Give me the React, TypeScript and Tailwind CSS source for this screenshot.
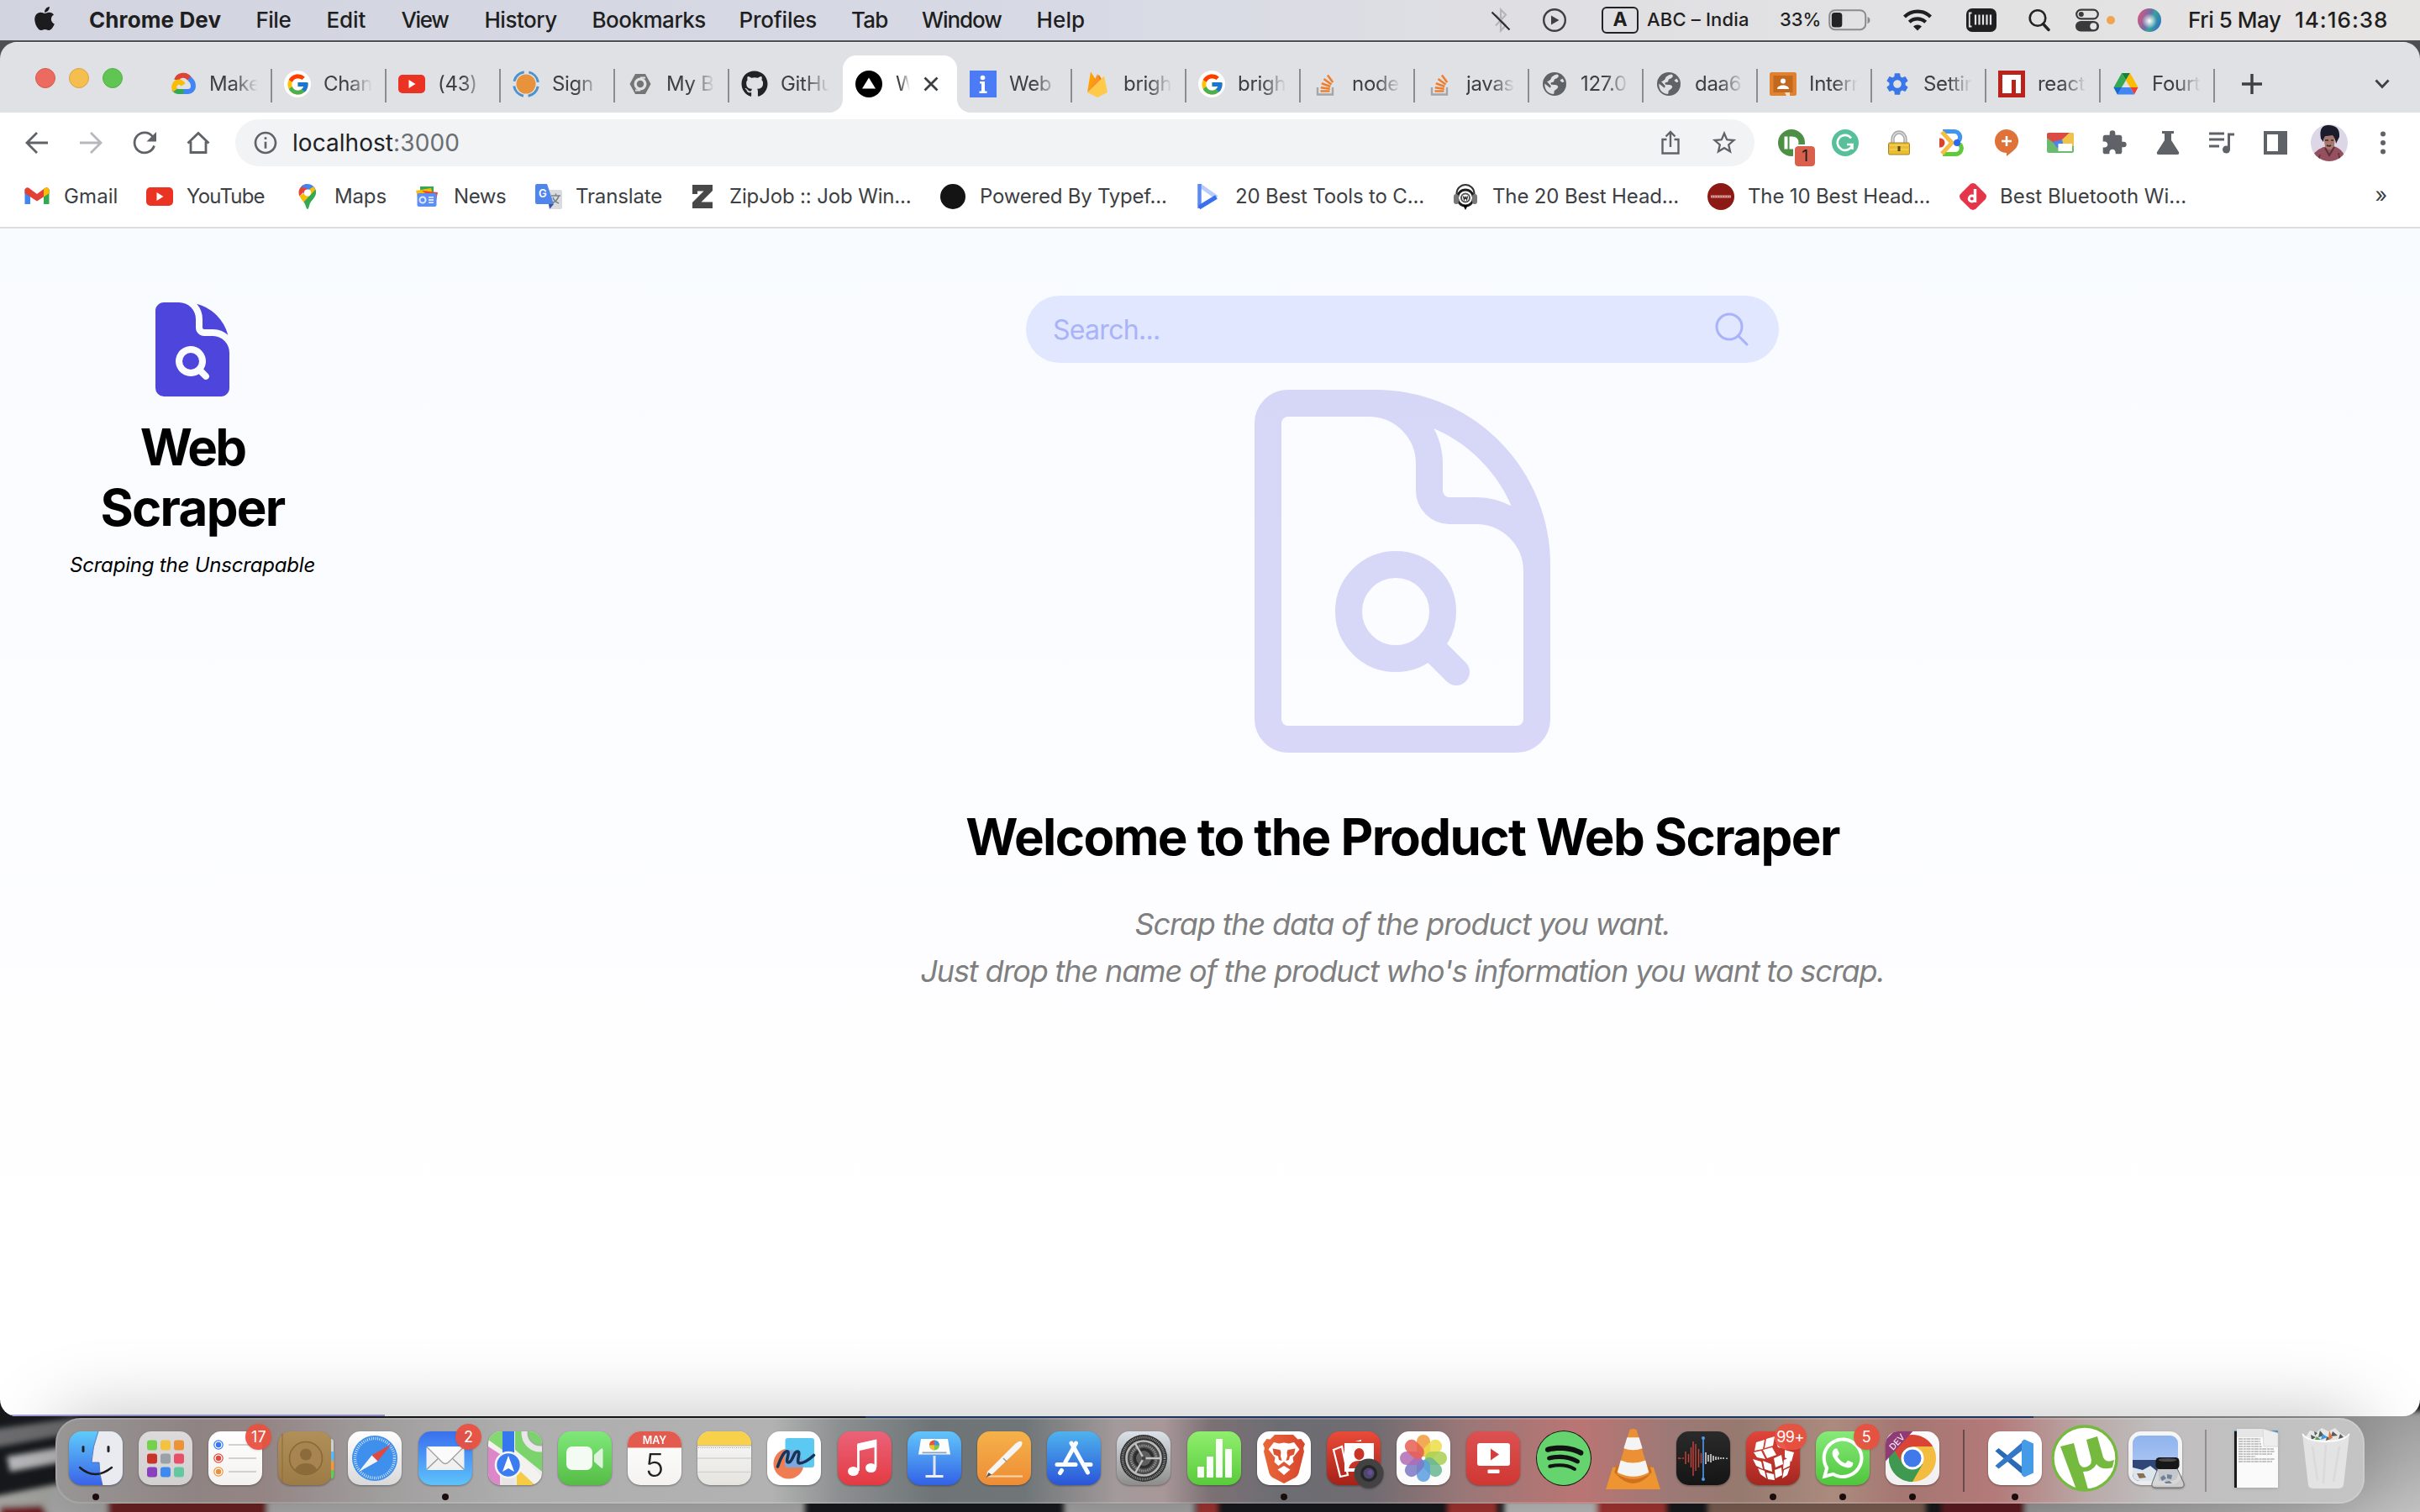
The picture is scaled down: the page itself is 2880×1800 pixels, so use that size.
import React from 'react';
import type { ReactNode } from 'react';
import { FcGoogle } from 'react-icons/fc';
import { FaGithub, FaSpotify, FaWhatsapp, FaApple } from 'react-icons/fa';
import { MdExtension, MdOutlineInfo, MdStarBorder, MdSettings } from 'react-icons/md';
import { HiDocumentMagnifyingGlass, HiOutlineDocumentMagnifyingGlass, HiOutlineMagnifyingGlass } from 'react-icons/hi2';

type Kids = { children?: ReactNode };

/* ---------- favicons (32 x 32) ---------- */

const Fav = ({ children }: Kids) => (
  <svg viewBox="0 0 32 32" className="size-8 shrink-0">
    {children}
  </svg>
);

const CloudIcon = () => (
  <Fav>
    <g fill="none" strokeWidth="6">
      <path d="M8 11.500A8.600 8.600 0 0 1 23.600 10" stroke="#db4437" />
      <path d="M23 9.500C26 11.500 28 14.500 28 18.500A6.300 6.300 0 0 1 22 24.900H16" stroke="#4285f4" />
      <path d="M16.500 24.900H10A6.300 6.300 0 0 1 5 22" stroke="#34a853" />
      <path d="M6.500 23.500A6.300 6.300 0 0 1 10.500 13.500Q14 13.500 16 17" stroke="#fbbc04" />
    </g>
  </Fav>
);

const GoogleIcon = () => (
  <span className="flex size-8 shrink-0 items-center justify-center rounded-full bg-white">
    <FcGoogle size={29} />
  </span>
);

const YouTubeIcon = () => (
  <Fav>
    <rect x="0" y="5" width="32" height="22" rx="5" fill="#ea3323" />
    <path d="M12.500 11v10l8-5z" fill="#fff" />
  </Fav>
);

const SignIcon = () => (
  <Fav>
    <circle cx="16" cy="16" r="11.500" fill="#e8923c" />
    <circle cx="16" cy="16" r="14.500" fill="none" stroke="#4b93cf" strokeWidth="3" strokeDasharray="17 5.780" strokeDashoffset="-3" />
  </Fav>
);

const HexIcon = () => (
  <Fav>
    <path d="M10 4h12l6.500 12L22 28H10L3.500 16z" fill="#757575" />
    <circle cx="16" cy="16" r="7.500" fill="#dfe1e5" />
    <path d="M16 8.500h6M16 23.500h-6" stroke="#dfe1e5" strokeWidth="2" />
    <circle cx="16" cy="16" r="4.200" fill="#757575" />
  </Fav>
);

const TriangleIcon = () => (
  <Fav>
    <circle cx="16" cy="16" r="16" fill="#000" />
    <path d="M16 8.500l8 13H8z" fill="#fff" />
  </Fav>
);

const InfoTileIcon = () => (
  <Fav>
    <rect width="32" height="32" fill="#4b7cf6" />
    <circle cx="15.500" cy="8.500" r="2.800" fill="#fff" />
    <path d="M12 13h6v11.500h2.500V27h-9v-2.500H14v-9h-2z" fill="#fff" />
  </Fav>
);

const FirebaseIcon = () => (
  <Fav>
    <path d="M4 26L8 1.500l6 9z" fill="#ffa000" />
    <path d="M4 26L18 5l4 7z" fill="#f57c00" />
    <path d="M4 26l9-15.500 3-6.500 3 7z" fill="#f6932c" />
    <path d="M4 26L24 6.500 28 26 16 32z" fill="#ffca4a" />
  </Fav>
);

const StackIcon = () => (
  <Fav>
    <path d="M6 20v8.500h18V20" fill="none" stroke="#a3a5a8" strokeWidth="2.400" />
    <g stroke="#ed7f31" strokeWidth="2.600">
      <path d="M9.500 24.500h11" />
      <path d="M9.800 20.300l11 1.500" />
      <path d="M10.800 15.200l10.500 3.800" />
      <path d="M13.500 10l9 6.500" />
      <path d="M18 5.500l6.200 8.500" />
    </g>
  </Fav>
);

const GlobeIcon = () => (
  <Fav>
    <circle cx="16" cy="16" r="14" fill="#5f6368" />
    <path d="M19 4.500c3 1 2 3 0 4.500s-3 0-3.500 3-4 1-4 3.500 6 .5 8 2.500-1 4-3 5.500 0 4-2 4.500C7 27.500 4 21 4.300 15.500l6.200 5q1.500 0 1-2.500L7 13q4-1 5-4t7-4.500z" fill="#dfe1e5" />
    <path d="M27.500 13q-3 2.500-5-1.500l3-2z" fill="#dfe1e5" />
  </Fav>
);

const ClassIcon = () => (
  <Fav>
    <rect y="2" width="32" height="28" rx="2.500" fill="#e0812f" />
    <rect x="4.500" y="6" width="23" height="20" fill="#c2691f" />
    <circle cx="16" cy="12.500" r="3" fill="#fff" />
    <path d="M9 22c0-6 14-6 14 0z" fill="#fff" />
    <path d="M18 26h6v4h-4z" fill="#fbe3cf" />
  </Fav>
);

const NpmIcon = () => (
  <Fav>
    <rect width="32" height="32" fill="#b9231c" />
    <path d="M5 5h22v22h-6V11h-5v16H5z" fill="#fff" />
  </Fav>
);

const DriveIcon = () => (
  <Fav>
    <path d="M11 3h10l-5 8.500z" fill="#188038" />
    <path d="M11 3L1.500 20l4.500 8.500L16 11.500z" fill="#34a853" />
    <path d="M21 3l9.500 17H21l-5-8.500z" fill="#fbbc04" />
    <path d="M30.500 20L26 28.500 21 20z" fill="#ea4335" />
    <path d="M11 20h10l5 8.500H6z" fill="#4285f4" />
    <path d="M1.500 20H11l-5 8.500z" fill="#1967d2" />
  </Fav>
);

const GmailIcon = () => (
  <Fav>
    <path d="M1.500 7v18h6.500V12z" fill="#4285f4" />
    <path d="M30.500 7v18H24V12z" fill="#34a853" />
    <path d="M1.500 8.500a3.200 3.200 0 0 1 5.200-2.500L16 13l9.300-7a3.200 3.200 0 0 1 5.200 2.500v3.500L16 21.500 1.500 12z" fill="#e34133" />
    <path d="M24 7l1.300-1a3.200 3.200 0 0 1 5.200 2.500v3.500L24 16.500z" fill="#fbbc04" />
  </Fav>
);

const MapsPinIcon = () => (
  <Fav>
    <path d="M16 1a10.500 10.500 0 0 0-8 3.700L16 12z" fill="#ea4335" />
    <path d="M16 1a10.500 10.500 0 0 1 9.500 6.500L14 18 8 4.700A10.500 10.500 0 0 1 16 1z" fill="#4285f4" />
    <path d="M8 4.700C5 8 5 12 6.500 15.500L16 6z" fill="#ea4335" />
    <path d="M6.500 15.500c1.500 3 3.500 5 5 7.500L26 9l-3-5z" fill="#fbbc04" />
    <path d="M25.500 7.500c2.500 7-3 11-6 15.500-1.500 2.500-2 8-3.500 8s-2-5-4.500-8.500z" fill="#34a853" />
    <circle cx="16" cy="11.500" r="4" fill="#fff" />
  </Fav>
);

const NewsIcon = () => (
  <Fav>
    <rect x="8" y="4" width="16" height="12" fill="#34a853" />
    <path d="M3 9l18-3 2 8-18 3z" fill="#fbbc04" />
    <path d="M10 9l19 2-2 10z" fill="#ea4335" />
    <rect x="4.500" y="12" width="23" height="16" rx="2" fill="#5b8ff5" />
    <circle cx="11" cy="20" r="3.500" fill="none" stroke="#dce8fd" strokeWidth="2" />
    <path d="M18 16.800h6M18 20h6M18 23.200h6" stroke="#dce8fd" strokeWidth="1.800" />
  </Fav>
);

const TranslateIcon = () => (
  <Fav>
    <path d="M13 8h17a2 2 0 0 1 2 2v19a2 2 0 0 1-2 2H18z" fill="#d9dbdd" />
    <path d="M16 25l6 0-5 6z" fill="#3353ab" />
    <path d="M2 1h12l8 24H2a2 2 0 0 1-2-2V3a2 2 0 0 1 2-2z" fill="#5085ed" />
    <text x="4" y="17" fontFamily="Inter, sans-serif" fontSize="13" fontWeight="600" fill="#fff">G</text>
    <path d="M19 15h11M24.500 12.500V15M28 15c-1 4-4 7-8 9M21 17c1 3 4 6 7 7" fill="none" stroke="#7a8288" strokeWidth="1.600" />
  </Fav>
);

const ZipIcon = () => (
  <Fav>
    <path d="M4 2h24v7L14.500 22.500H28V30H4v-7L17.500 9.500H10V13H4z" fill="#484848" />
  </Fav>
);

const BlackDotIcon = () => (
  <Fav>
    <circle cx="16" cy="16" r="15" fill="#141414" />
  </Fav>
);

const PlayOutlineIcon = () => (
  <Fav>
    <path d="M5.500 2.500L26 17" stroke="#b9cdfb" strokeWidth="5" fill="none" />
    <path d="M5.500 1v29" stroke="#5b8af5" strokeWidth="4.500" fill="none" />
    <path d="M5 29l20.500-12.500" stroke="#3c6ff0" strokeWidth="5" fill="none" />
  </Fav>
);

const HeadphoneIcon = () => (
  <Fav>
    <circle cx="16" cy="12.500" r="10.500" fill="#fff" stroke="#333" strokeWidth="2" />
    <circle cx="16" cy="17.500" r="9.500" fill="#fff" stroke="#1d1d1d" strokeWidth="3" />
    <rect x="2" y="13" width="6" height="12" rx="3" fill="#777" />
    <rect x="24" y="13" width="6" height="12" rx="3" fill="#777" />
    <circle cx="16" cy="17.500" r="5" fill="none" stroke="#555" strokeWidth="2" />
    <path d="M13.500 15.500l1 4 1.500-3 1.500 3 1-4" fill="none" stroke="#333" strokeWidth="1.400" />
    <path d="M13 26h6l-3 6z" fill="#000" />
  </Fav>
);

const RedDiscIcon = () => (
  <Fav>
    <circle cx="16" cy="16" r="16" fill="#8c1913" />
    <path d="M4 16h24" stroke="#d9a09c" strokeWidth="3" />
    <path d="M5 16h22" stroke="#a34540" strokeWidth="1" strokeDasharray="1.500 1.500" />
  </Fav>
);

const RedDiamondIcon = () => (
  <Fav>
    <path d="M16 0q3 0 5 3l8 8q3 2.500 3 5t-3 5l-8 8q-2 3-5 3t-5-3l-8-8q-3-2.500-3-5t3-5l8-8q2-3 5-3z" fill="#e5354a" />
    <path d="M18.500 7v16" stroke="#fff" strokeWidth="3.400" />
    <circle cx="14.800" cy="18.500" r="3.600" fill="none" stroke="#fff" strokeWidth="3" />
  </Fav>
);

/* ---------- menu bar ---------- */

const MenuBar = () => (
  <header className="relative flex h-12 items-center bg-[linear-gradient(to_right,#d2d5df,#d7dae5_45%,#dfdfe3_62%,#e6e4e3)] pb-px text-[26px] font-medium tracking-[-0.5px] text-[#1f1f21]">
    <div className="flex w-[106px] justify-center pb-1">
      <FaApple size={32} color="#1c1c1e" />
    </div>
    <span className="w-[198.500px] font-bold tracking-[0.100px]">Chrome Dev</span>
    <span className="w-[84px]">File</span>
    <span className="w-[89px] tracking-[-0.100px]">Edit</span>
    <span className="w-[99px] tracking-[-1.400px]">View</span>
    <span className="w-[128px]">History</span>
    <span className="w-[175px]">Bookmarks</span>
    <span className="w-[133.600px] tracking-[-0.200px]">Profiles</span>
    <span className="w-[84px] tracking-[-0.900px]">Tab</span>
    <span className="w-[136.500px] tracking-[-1.100px]">Window</span>
    <span className="tracking-[0.100px]">Help</span>

    <div className="ml-auto flex w-[1120px] items-center whitespace-nowrap">
      <div className="flex w-[52px] justify-center">
        <svg viewBox="0 0 24 30" className="h-[30px] w-6" fill="none">
          <path d="M6 8.500l12 12.500-6 6.500V2.500l6 6L6 21.500" stroke="#b4b5b9" strokeWidth="2.200" />
          <path d="M1.500 5.500l21 21" stroke="#2b2b2d" strokeWidth="2.200" />
        </svg>
      </div>
      <div className="flex w-[76px] justify-center">
        <svg viewBox="0 0 30 30" className="size-[30px]">
          <circle cx="15" cy="15" r="12.800" fill="none" stroke="#3f3f42" strokeWidth="2.400" />
          <path d="M11 9.500v11l9.500-5.500z" fill="#3f3f42" />
        </svg>
      </div>
      <div className="ml-[18px] flex h-8 w-11 items-center justify-center rounded-md border-[2.500px] border-[#232325] text-[23px] font-bold tracking-normal">A</div>
      <span className="ml-[10px] w-[158px] text-[22px] tracking-[0.170px]">ABC – India</span>
      <span className="w-[58px] text-[22px] tracking-normal">33%</span>
      <svg viewBox="0 0 50 26" className="h-[26px] w-[50px]">
        <rect x="1.200" y="1.200" width="43" height="23" rx="6.500" fill="none" stroke="#8b8b8e" strokeWidth="2" />
        <rect x="3.800" y="4" width="12.500" height="17.500" rx="3.500" fill="#232325" />
        <path d="M46.500 9v8q3-1 3-4t-3-4z" fill="#8b8b8e" />
      </svg>
      <div className="flex w-28 justify-center">
        <svg viewBox="0 0 36 28" className="h-7 w-9" fill="none" stroke="#1f1f21" strokeWidth="4.200">
          <path d="M2.500 10a22 22 0 0 1 31 0" />
          <path d="M8.300 16.300a14 14 0 0 1 19.400 0" />
          <path d="M18 26.500l-5-5a7.500 7.500 0 0 1 10 0z" fill="#1f1f21" stroke="none" />
        </svg>
      </div>
      <svg viewBox="0 0 36 28" className="ml-0.5 h-7 w-9">
        <rect width="36" height="28" rx="7" fill="#1f1f21" />
        <path d="M6.500 5.500H3.800v16h2.700" fill="none" stroke="#e4e2e4" strokeWidth="1.800" />
        <path d="M11 7.500v12M15.500 7.500v12M20 7.500v12M24.500 7.500v12M29 7.500v12" stroke="#e4e2e4" strokeWidth="2.200" />
      </svg>
      <svg viewBox="0 0 26 28" className="ml-[38px] h-7 w-[26px]" fill="none" stroke="#232325">
        <circle cx="11" cy="11.500" r="9.300" strokeWidth="2.600" />
        <path d="M17.500 18.500l6.500 7" strokeWidth="3.400" strokeLinecap="round" />
      </svg>
      <svg viewBox="0 0 28 28" className="ml-[30px] size-7">
        <rect x="1.200" y="1.700" width="25.600" height="10.600" rx="5.300" fill="none" stroke="#3a3a3c" strokeWidth="2.200" />
        <circle cx="6.800" cy="7" r="3" fill="#3a3a3c" />
        <rect x="0" y="15" width="28" height="12.500" rx="6.250" fill="#3a3a3c" />
        <circle cx="21.300" cy="21.200" r="4" fill="#e4e2e4" />
      </svg>
      <span className="ml-[9px] size-2.5 rounded-full bg-[#f0a44f]" />
      <svg viewBox="0 0 28 28" className="ml-[27px] size-7">
        <defs>
          <radialGradient id="siriCore"><stop offset="0" stopColor="#fff" /><stop offset="1" stopColor="#fff" stopOpacity="0" /></radialGradient>
          <linearGradient id="siriRing" x1="0" y1="0.300" x2="1" y2="0.700"><stop offset="0" stopColor="#d9567f" /><stop offset="0.450" stopColor="#6b6fa5" /><stop offset="0.600" stopColor="#3aa19b" /><stop offset="1" stopColor="#2f6fc4" /></linearGradient>
        </defs>
        <circle cx="14" cy="14" r="14" fill="url(#siriRing)" />
        <circle cx="14" cy="15" r="9" fill="url(#siriCore)" />
      </svg>
      <span className="ml-[32px] w-[127px] tracking-[-0.450px]">Fri 5 May</span>
      <span className="tracking-[1px]">14:16:38</span>
    </div>
  </header>
);

/* ---------- tab strip ---------- */

const tabs: { label: string; icon: ReactNode; line?: boolean; active?: boolean }[] = [
  { label: 'Make', icon: <CloudIcon />, line: true },
  { label: 'Chan', icon: <GoogleIcon />, line: true },
  { label: '(43)', icon: <YouTubeIcon />, line: true },
  { label: 'Sign', icon: <SignIcon />, line: true },
  { label: 'My B', icon: <HexIcon />, line: true },
  { label: 'GitHu', icon: <FaGithub size={32} color="#1f2328" className="shrink-0" /> },
  { label: 'W', icon: <TriangleIcon />, active: true },
  { label: 'Web', icon: <InfoTileIcon />, line: true },
  { label: 'brigh', icon: <FirebaseIcon />, line: true },
  { label: 'brigh', icon: <GoogleIcon />, line: true },
  { label: 'node', icon: <StackIcon />, line: true },
  { label: 'javas', icon: <StackIcon />, line: true },
  { label: '127.0', icon: <GlobeIcon />, line: true },
  { label: 'daa6', icon: <GlobeIcon />, line: true },
  { label: 'Intern', icon: <ClassIcon />, line: true },
  { label: 'Settin', icon: <MdSettings size={32} color="#3a76e8" className="shrink-0" />, line: true },
  { label: 'react', icon: <NpmIcon />, line: true },
  { label: 'Fourt', icon: <DriveIcon />, line: true },
];

const ActiveTab = ({ icon, label }: { icon: ReactNode; label: string }) => (
  <div className="relative flex h-full w-[136px] shrink-0 items-center rounded-t-2xl bg-white pl-[15px]">
    <svg viewBox="0 0 16 16" className="absolute bottom-0 -left-4 size-4"><path d="M16 0v16H0A16 16 0 0 0 16 0z" fill="#fff" /></svg>
    <svg viewBox="0 0 16 16" className="absolute -right-4 bottom-0 size-4"><path d="M0 0v16h16A16 16 0 0 1 0 0z" fill="#fff" /></svg>
    {icon}
    <span className="ml-4 w-[17px] overflow-hidden [mask-image:linear-gradient(to_right,black_30%,transparent)]">{label}</span>
    <svg viewBox="0 0 18 18" className="ml-4 size-[18px]"><path d="M1.500 1.500l15 15M16.500 1.500l-15 15" stroke="#3c4043" strokeWidth="2.800" /></svg>
  </div>
);

const TabStrip = () => (
  <div className="flex h-[84px] items-end border-t border-[#eff0f3] bg-[#dfe1e5] text-[24px] text-[#3c4043]">
    <div className="flex h-[82px] w-[187px] shrink-0 items-center gap-4 pl-[42px]">
      <span className="size-6 rounded-full border border-[#d5594f] bg-[#ec6b60]" />
      <span className="size-6 rounded-full border border-[#dba33d] bg-[#f5bf4f]" />
      <span className="size-6 rounded-full border border-[#55b045] bg-[#61c554]" />
    </div>
    <div className="flex h-[68px] items-center">
      {tabs.map((t, i) =>
        t.active ? (
          <ActiveTab key={i} icon={t.icon} label={t.label} />
        ) : (
          <div key={i} className="flex h-full w-[136px] shrink-0 items-center pl-[15px]">
            {t.icon}
            <span className="ml-[15px] w-[58px] overflow-hidden whitespace-nowrap tracking-[-0.300px] [mask-image:linear-gradient(to_right,black_50%,transparent)]">{t.label}</span>
            {t.line && <span className="mt-1 -mr-px ml-auto h-10 w-0.5 bg-[#8a8d91]" />}
          </div>
        ),
      )}
      <svg viewBox="0 0 24 24" className="ml-[33px] size-6"><path d="M12 0v24M0 12h24" stroke="#3c4043" strokeWidth="3.400" /></svg>
    </div>
    <div className="ml-auto flex h-[68px] w-[54px] items-center">
      <svg viewBox="0 0 18 12" className="h-3 w-[18px]"><path d="M1.500 1.500L9 9.500l7.500-8" fill="none" stroke="#3c4043" strokeWidth="2.800" /></svg>
    </div>
  </div>
);

/* ---------- toolbar ---------- */

const Slot = ({ children }: Kids) => <div className="flex w-16 shrink-0 items-center justify-center">{children}</div>;

const Toolbar = () => (
  <div className="flex h-[72px] items-center bg-white pl-3">
    <Slot>
      <Fav><path d="M29 16H4.500M16 4L4 16l12 12" fill="none" stroke="#5f6368" strokeWidth="2.800" /></Fav>
    </Slot>
    <Slot>
      <Fav><path d="M3 16h24.500M16 4l12 12-12 12" fill="none" stroke="#b6b8bb" strokeWidth="2.800" /></Fav>
    </Slot>
    <Slot>
      <Fav>
        <path d="M27.500 19.500A12 12 0 1 1 25.500 8.500" fill="none" stroke="#5f6368" strokeWidth="2.800" />
        <path d="M30 3v11.500H18.500z" fill="#5f6368" />
      </Fav>
    </Slot>
    <Slot>
      <Fav><path d="M7 14.500V27.500h18V14.500M3.500 16.500L16 4.500l12.500 12" fill="none" stroke="#5f6368" strokeWidth="2.800" /></Fav>
    </Slot>
    <div className="ml-3 flex h-14 w-[1808px] shrink-0 items-center rounded-full bg-[#f1f3f4] pr-1 pl-5 text-[28px]">
      <MdOutlineInfo size={32} color="#5f6368" />
      <span className="ml-4 tracking-[0.050px] text-[#202124]">localhost</span>
      <span className="tracking-[0.100px] text-[#6a6e73]">:3000</span>
      <div className="ml-auto flex">
        <Slot>
          <Fav><path d="M11.500 12H6.500v16.500h19V12h-5M16 21V4M10.500 8.500L16 3l5.500 5.500" fill="none" stroke="#5f6368" strokeWidth="2.400" /></Fav>
        </Slot>
        <Slot><MdStarBorder size={34} color="#5f6368" /></Slot>
      </div>
    </div>
    <div className="ml-3 flex items-center">
      <Slot>
        <div className="relative size-8">
          <Fav>
            <circle cx="16" cy="16" r="16" fill="#4c8f45" />
            <path d="M7.500 8.500h4v15h-4zM13.500 8.500h3q8 0 8 7.500t-8 7.500h-3z" fill="#fff" />
          </Fav>
          <span className="absolute top-5 left-5 flex size-6 items-center justify-center rounded-[4px] bg-[#d9604c] text-[19px] text-[#1d1d1d] outline-2 outline-white">1</span>
        </div>
      </Slot>
      <Slot>
        <Fav>
          <circle cx="16" cy="16" r="16" fill="#57c09b" />
          <path d="M23 10.500A9 9 0 1 0 24.500 18h-6.500M24.500 17v7" fill="none" stroke="#fff" strokeWidth="2.600" />
        </Fav>
      </Slot>
      <Slot>
        <Fav>
          <path d="M8.500 18v-6a7.500 8.500 0 0 1 15 0v6" fill="none" stroke="#a9a9a9" strokeWidth="4.400" />
          <path d="M8.500 18v-6a7.500 8.500 0 0 1 15 0v6" fill="none" stroke="#dcdcdc" strokeWidth="1.600" />
          <rect x="3.500" y="16" width="25" height="14" rx="1.500" fill="#e9bd2e" stroke="#a08033" />
          <path d="M5 19h22M5 24h22" stroke="#f6da74" />
          <path d="M16 20v6" stroke="#5b4510" strokeWidth="3" />
        </Fav>
      </Slot>
      <Slot>
        <Fav>
          <path d="M4 2.500h14a7 7 0 0 1 6 10L20 16" fill="none" stroke="#4095ee" strokeWidth="5" />
          <path d="M4 29.500h16a7 7 0 0 0 5-11L20 16" fill="none" stroke="#5fc93a" strokeWidth="5" />
          <path d="M3 3l12 13L3 29" fill="none" stroke="#f5bd48" strokeWidth="5" />
          <path d="M1 11.500a4.500 4.500 0 0 1 0 9z" fill="#d8452e" stroke="#d8452e" strokeWidth="2" />
          <circle cx="21" cy="16" r="4" fill="#2a68f0" />
        </Fav>
      </Slot>
      <Slot>
        <Fav>
          <path d="M16 0a14 14 0 0 1 8 25.500L16 32v-4a14 14 0 0 1 0-28z" fill="#df7239" />
          <path d="M16 8v12M10 14h12" stroke="#fff" strokeWidth="2.600" />
        </Fav>
      </Slot>
      <Slot>
        <Fav>
          <rect y="4" width="32" height="24" rx="2.500" fill="#6cb970" />
          <path d="M0 10V6.500A2.500 2.500 0 0 1 2.500 4H27l-9 9-10 3z" fill="#dc4b43" />
          <path d="M27 4h2.500A2.500 2.500 0 0 1 32 6.500V20H20l-3-7z" fill="#f0c24a" />
          <path d="M7 15l11-3 2 8-8 2z" fill="#4c82ee" />
          <rect x="13.500" y="17" width="16.500" height="9" fill="#fff" />
        </Fav>
      </Slot>
      <Slot><MdExtension size={32} color="#5f6368" /></Slot>
      <Slot>
        <Fav><path d="M9 2h14v3h-3v8l9 14q1 3-2 3H5q-3 0-2-3l9-14V5H9z" fill="#5f6368" /></Fav>
      </Slot>
      <Slot>
        <Fav>
          <path d="M1 5h18M1 12h18M1 20h12" stroke="#5f6368" strokeWidth="2.800" />
          <path d="M31 6h-6.500v18" fill="none" stroke="#5f6368" strokeWidth="3" />
          <circle cx="21.500" cy="24" r="4.500" fill="#5f6368" />
        </Fav>
      </Slot>
      <Slot>
        <Fav><path d="M2 2h28v28H2zM6 6v20h13V6z" fill="#5f6368" fillRule="evenodd" /></Fav>
      </Slot>
      <Slot>
        <svg viewBox="0 0 44 44" className="size-11 shrink-0">
          <defs><clipPath id="avatarClip"><circle cx="22" cy="22" r="22" /></clipPath></defs>
          <g clipPath="url(#avatarClip)">
            <rect width="44" height="44" fill="#dcd6e6" />
            <path d="M0 44q2-12 15-17l12-1q14 4 15 20z" fill="#94505f" />
            <path d="M15 12h14l-1 14q-5 8-11 1z" fill="#a8776c" />
            <path d="M12 17Q9 1 21 1q14 0 13 14l-4 8q-1-7-4-10-6 1-9 1-2 3-2 7z" fill="#1a1c2b" />
            <path d="M17 19h4M24 19h3M19 25q3 1.500 5 0" stroke="#3a2427" strokeWidth="1.600" />
            <path d="M17 28l5 9 6-10" fill="none" stroke="#5c2f3c" strokeWidth="2" />
            <path d="M11 36l-2 8M33 34l2 10" stroke="#6b3544" strokeWidth="2" />
          </g>
        </svg>
      </Slot>
      <Slot>
        <Fav><circle cx="16" cy="5.500" r="3" fill="#5f6368" /><circle cx="16" cy="16" r="3" fill="#5f6368" /><circle cx="16" cy="26.500" r="3" fill="#5f6368" /></Fav>
      </Slot>
    </div>
  </div>
);

/* ---------- bookmarks ---------- */

const Bookmark = ({ icon, className, children }: Kids & { icon: ReactNode; className: string }) => (
  <div className={`flex shrink-0 items-center gap-4 ${className}`}>
    {icon}
    <span>{children}</span>
  </div>
);

const Bookmarks = () => (
  <nav className="flex h-[66px] items-center border-b-2 border-[#dcdddf] bg-white pb-2 pl-7 text-[24px] tracking-[-0.150px] whitespace-nowrap text-[#3c4043]">
    <Bookmark className="w-[146px] tracking-[0.100px]" icon={<GmailIcon />}>Gmail</Bookmark>
    <Bookmark className="w-[176px] tracking-[-0.800px]" icon={<YouTubeIcon />}>YouTube</Bookmark>
    <Bookmark className="w-[142px]" icon={<MapsPinIcon />}>Maps</Bookmark>
    <Bookmark className="w-[145px] tracking-[-0.400px]" icon={<NewsIcon />}>News</Bookmark>
    <Bookmark className="w-[183px]" icon={<TranslateIcon />}>Translate</Bookmark>
    <Bookmark className="w-[298px]" icon={<ZipIcon />}>ZipJob :: Job Win...</Bookmark>
    <Bookmark className="w-[304px] tracking-[-0.220px]" icon={<BlackDotIcon />}>Powered By Typef...</Bookmark>
    <Bookmark className="w-[306px]" icon={<PlayOutlineIcon />}>20 Best Tools to C...</Bookmark>
    <Bookmark className="w-[304px]" icon={<HeadphoneIcon />}>The 20 Best Head...</Bookmark>
    <Bookmark className="w-[300px]" icon={<RedDiscIcon />}>The 10 Best Head...</Bookmark>
    <Bookmark className="tracking-normal" icon={<RedDiamondIcon />}>Best Bluetooth Wi...</Bookmark>
    <span className="mr-[39px] ml-auto pb-0.5 text-[25px]">»</span>
  </nav>
);

/* ---------- page ---------- */

const Page = () => (
  <div className="flex flex-1 bg-[linear-gradient(to_bottom,#f8fbff,#fbfcff_35%,#fefeff_70%,#ffffff)] text-black">
    <aside className="flex w-[458px] flex-col items-center border-b-2 border-[#a5a0e0] pt-20">
      <HiDocumentMagnifyingGlass size={128} color="#4e46dc" />
      <h1 className="mt-4 text-center text-[60px] leading-[72px] font-bold">
        <span className="block tracking-[-2.800px]">Web</span>
        <span className="block tracking-[-1.700px]">Scraper</span>
      </h1>
      <p className="mt-[17px] text-[24px] leading-8 tracking-[-0.200px] italic">Scraping the Unscrapable</p>
    </aside>
    <main className="flex flex-1 flex-col items-center pt-20">
      <div className="flex h-20 w-[896px] items-center justify-between rounded-full bg-[#e0e7fe] pr-8 pl-8 text-[32px] tracking-[-0.700px] text-[#a8b3fa]">
        <span className="pt-0.5">Search...</span>
        <HiOutlineMagnifyingGlass size={48} />
      </div>
      <HiOutlineDocumentMagnifyingGlass size={512} className="opacity-20" color="#4e46dc" />
      <h2 className="mt-4 text-[60px] leading-[72px] font-bold tracking-[-1.580px]">Welcome to the Product Web Scraper</h2>
      <p className="mt-10 text-center text-[36px] leading-[56px] tracking-[-1.140px] text-[#7f7f80] italic">
        Scrap the data of the product you want.
        <br />
        Just drop the name of the product who's information you want to scrap.
      </p>
    </main>
  </div>
);

/* ---------- dock icons (64 x 64) ---------- */

const Tile = ({ id, from, to, children }: Kids & { id: string; from: string; to: string }) => (
  <svg viewBox="0 0 64 64" className="size-16 overflow-visible drop-shadow-[0_1px_1px_rgba(0,0,0,0.35)]">
    <defs>
      <linearGradient id={id} x1="0" y1="0" x2="0" y2="1"><stop offset="0" stopColor={from} /><stop offset="1" stopColor={to} /></linearGradient>
      <clipPath id={`${id}Clip`}><rect width="64" height="64" rx="15" /></clipPath>
    </defs>
    <rect width="64" height="64" rx="15" fill={`url(#${id})`} />
    {children}
  </svg>
);

const Finder = () => (
  <Tile id="finder" from="#5fcbfa" to="#3a63e8">
    <g clipPath="url(#finderClip)">
      <path d="M35 0Q28 18 27 37h9q0 14 4 27h26V-2z" fill="#e9ebf0" />
    </g>
    <path d="M17 18.500v5M47 18.500v5" stroke="#222" strokeWidth="3" strokeLinecap="round" />
    <path d="M13 43q18 16 38 0" fill="none" stroke="#1c1c1c" strokeWidth="2.400" strokeLinecap="round" />
    <path d="M35 0Q28 18 27 37h9q0 14 4 27" fill="none" stroke="#3d5fbf" strokeWidth="0.800" />
  </Tile>
);

const launchColors = ['#74d14c', '#f3c23f', '#ee9236', '#c9342a', '#9aa2a8', '#e8506a', '#8a3fc0', '#3d8bf0', '#63c7a0'];
const Launchpad = () => (
  <Tile id="launchpad" from="#dcdadb" to="#d3d0d0">
    {launchColors.map((c, i) => (
      <rect key={i} x={10 + (i % 3) * 16} y={10.500 + Math.floor(i / 3) * 16} width="12" height="12" rx="3" fill={c} />
    ))}
  </Tile>
);

const Reminders = () => (
  <Tile id="reminders" from="#ffffff" to="#f3f2f0">
    {['#3478f6', '#e0493d', '#e8913a'].map((c, i) => (
      <g key={c}>
        <circle cx="12" cy={16 + i * 16} r="5.200" fill="#fff" stroke={c} strokeWidth="1.200" />
        <circle cx="12" cy={16 + i * 16} r="3.200" fill={c} />
        <path d={`M24 ${16 + i * 16}h33`} stroke="#c4c4c4" strokeWidth="1.400" />
      </g>
    ))}
  </Tile>
);

const Contacts = () => (
  <Tile id="contacts" from="#b08f58" to="#9c7b46">
    <path d="M63 9q3 0 3 4v11h-3z" fill="#cfcfcf" />
    <path d="M63 24h3.500v11H63z" fill="#5eb8f5" />
    <path d="M63 35h3.500v11H63z" fill="#f09a3a" />
    <path d="M63 46h3.500v6q0 4-3.500 5z" fill="#65c956" />
    <path d="M5 3v58" stroke="#8f6f3c" strokeWidth="1.200" />
    <circle cx="33" cy="32" r="19.500" fill="#a88550" stroke="#876837" strokeWidth="1.600" />
    <circle cx="33" cy="27.500" r="7" fill="#8b6b3a" />
    <path d="M20 46q3-8 13-8t13 8q-13 11-26 0z" fill="#8b6b3a" />
  </Tile>
);

const Safari = () => (
  <Tile id="safari" from="#ffffff" to="#d9d9da">
    <circle cx="32" cy="32" r="27" fill="#3f8fec" />
    <circle cx="32" cy="32" r="23.500" fill="none" stroke="#e6f2ff" strokeWidth="3.500" strokeDasharray="0.800 1.660" />
    <path d="M51.500 15.500L28.500 28.500l7 7z" fill="#e2483d" />
    <path d="M12.500 48.500l16-20 7 7z" fill="#f4f4f4" />
  </Tile>
);

const Mail = () => (
  <Tile id="mail" from="#3a6fee" to="#5ec3fb">
    <rect x="9.500" y="18" width="45" height="28" rx="2.500" fill="#f0f0f0" />
    <path d="M10 45l16-15M54 45L38 30" stroke="#9a9a9a" strokeWidth="1.300" />
    <path d="M10 18.500l18 18q4 4 8 0l18-18" fill="#fbfbfb" stroke="#a4a4a4" strokeWidth="1.300" />
  </Tile>
);

const MapsApp = () => (
  <Tile id="mapsApp" from="#f5f5f2" to="#e9e9e6">
    <g clipPath="url(#mapsAppClip)">
      <path d="M0 0h17v22L0 10z" fill="#84d872" />
      <path d="M32 0h32v48L32 22z" fill="#7bd36b" />
      <circle cx="62" cy="2" r="19" fill="none" stroke="#e8e6e8" strokeWidth="7" />
      <circle cx="62" cy="2" r="14" fill="none" stroke="#a9a9ad" strokeWidth="1.500" />
      <path d="M0 18l14 9v37H0z" fill="#dd86c9" />
      <path d="M34 64V44l22 20z" fill="#f5cc43" />
      <path d="M30 20l34 34v10h-8L30 38z" fill="#f4f2ef" />
      <path d="M17 0h14v34H17z" fill="#3477ee" />
      <path d="M17 50h14v14H17z" fill="#e7e5e6" />
    </g>
    <circle cx="24" cy="40" r="15" fill="#3c7cf1" stroke="#f4f4f4" strokeWidth="2.600" />
    <path d="M24 29l7 19-7-4-7 4z" fill="#fff" />
  </Tile>
);

const FaceTime = () => (
  <Tile id="facetime" from="#7fe87a" to="#55bd45">
    <rect x="10" y="18" width="31" height="28" rx="7" fill="#f3fbf2" />
    <path d="M43 28l8.500-7.500q2-1 2 1.500v20q0 2.500-2 1.500L43 36z" fill="#dff3dc" />
  </Tile>
);

const Calendar = () => (
  <Tile id="calendar" from="#ffffff" to="#f4f3f1">
    <path d="M0 19.500V15A15 15 0 0 1 15 0h34a15 15 0 0 1 15 15v4.500z" fill="#e25b4e" />
    <text x="32" y="14.800" textAnchor="middle" fontFamily="Inter, sans-serif" fontSize="12.500" fontWeight="600" fill="#fff">MAY</text>
    <text x="32" y="54" textAnchor="middle" fontFamily="Inter, sans-serif" fontSize="38" fontWeight="300" fill="#222">5</text>
  </Tile>
);

const Notes = () => (
  <Tile id="notes" from="#fafafa" to="#e5e4df">
    <path d="M0 16.500V15A15 15 0 0 1 15 0h34a15 15 0 0 1 15 15v1.500z" fill="#f7d04c" />
    <path d="M0 17h64" stroke="#a89a6c" strokeWidth="0.800" />
    <path d="M1 19.500h62" stroke="#9b9b9b" strokeWidth="1" strokeDasharray="1 1.500" />
    <path d="M0 32h64M0 48.500h64" stroke="#d4d4d4" strokeWidth="1.400" />
  </Tile>
);

const Freeform = () => (
  <Tile id="freeform" from="#ffffff" to="#ffffff">
    <circle cx="25.500" cy="38.500" r="18" fill="#f07c52" />
    <rect x="21.500" y="8" width="34.500" height="35" rx="3" fill="#5cc9f2" />
    <path d="M21.500 22a18 18 0 0 1 21 21h-18a3 3 0 0 1-3-3z" fill="#7aa9e2" />
    <path d="M12.500 42q7-20 12-18c3 1-4 13 1 13 5 0 6-14 11-13 4 1-3 13 2 14 6 0 11-4 17-9.500" fill="none" stroke="#173657" strokeWidth="3.600" strokeLinecap="round" />
  </Tile>
);

const Music = () => (
  <Tile id="music" from="#ea6379" to="#e43a42">
    <path d="M24.500 47V16.500L45 11.500V42.500" fill="none" stroke="#fff" strokeWidth="2.800" />
    <path d="M23.500 14.500l22.500-5v9l-22.500 5z" fill="#fff" />
    <ellipse cx="18.500" cy="47.500" rx="6.500" ry="5.500" fill="#fff" />
    <ellipse cx="39.500" cy="43.500" rx="6.500" ry="5.500" fill="#fff" />
  </Tile>
);

const Keynote = () => (
  <Tile id="keynote" from="#62c5fa" to="#3262e6">
    <path d="M16 9h32l3 18.500H13z" fill="#fcfcfc" />
    <path d="M17.500 24.500h29v1.800h-29z" fill="#8fa4b8" />
    <circle cx="32" cy="16.500" r="6" fill="#7fc94a" />
    <path d="M32 16.500v-6a6 6 0 0 1 6 6z" fill="#4a90e2" />
    <path d="M32 16.500v-6a6 6 0 0 0-6 6z" fill="#e8543f" />
    <path d="M32 16.500h-6a6 6 0 0 0 6 6z" fill="#efc23d" />
    <path d="M32 29v24" stroke="#e2e6ec" strokeWidth="3" />
    <path d="M21.500 53.500h21" stroke="#eef0f3" strokeWidth="3" />
  </Tile>
);

const Pages = () => (
  <Tile id="pages" from="#f5b24a" to="#ee8c35">
    <path d="M12 53.500h42" stroke="#fbd9ae" strokeWidth="1.800" />
    <path d="M12 48L45 15q5-4.500 7.500-3t-1 7L18.500 50.500 11 54z" fill="#f5f5f5" />
    <path d="M31 32l4.500 4.500" stroke="#999" strokeWidth="1.500" />
    <path d="M13.500 49l3.500 2.500-6.500 3.500z" fill="#555" />
  </Tile>
);

const AppStore = () => (
  <Tile id="appstore" from="#4fb3ee" to="#2a55d8">
    <g stroke="#fbfdff" strokeWidth="5" strokeLinecap="round">
      <path d="M34.500 14L22 36.500M29 14l19.500 35" />
      <path d="M12 39.500h22M44 39.500h8" />
      <path d="M17.500 46.500l-2 3" />
    </g>
  </Tile>
);

const SystemSettings = () => (
  <Tile id="settings" from="#dbe2e9" to="#8d8d8b">
    <circle cx="32" cy="32" r="28" fill="#2f2f30" />
    <circle cx="32" cy="32" r="25" fill="none" stroke="#8d8d8d" strokeWidth="3" strokeDasharray="1 1.100" />
    <circle cx="32" cy="32" r="20.500" fill="#4a4a4b" stroke="#b9b9b9" strokeWidth="2.600" />
    <circle cx="32" cy="32" r="15" fill="none" stroke="#8f8f8f" strokeWidth="3" strokeDasharray="1.500 1" />
    <circle cx="32" cy="32" r="10.500" fill="#5e5e5f" stroke="#2c2c2d" strokeWidth="3" />
    <path d="M32 32h20M32 32L22 14.500M32 32L22 49.500" stroke="#c4c4c4" strokeWidth="2.400" />
    <circle cx="32" cy="32" r="2.500" fill="#444" />
  </Tile>
);

const Numbers = () => (
  <Tile id="numbers" from="#90ee6e" to="#59cb3b">
    <g fill="#f8fff6">
      <rect x="12" y="42" width="8" height="13" rx="1" />
      <rect x="23" y="30" width="8" height="25" rx="1" />
      <rect x="34" y="9" width="8" height="46" rx="1" />
      <rect x="45" y="21" width="8" height="34" rx="1" />
    </g>
  </Tile>
);

const Brave = () => (
  <Tile id="brave" from="#ffffff" to="#ffffff">
    <defs><linearGradient id="braveFill"><stop offset="0" stopColor="#e8683a" /><stop offset="1" stopColor="#d8452c" /></linearGradient></defs>
    <path d="M21 4h22l5.500 5.500 4-.5 4.500 6-2 5 1 4-6.500 26q-1 3-4 5L32 62l-13.500-7q-3-2-4-5L8 24l1-4-2-5 4.500-6 4 .5z" fill="url(#braveFill)" />
    <path d="M20 13l6 1.500 6-1 6 1 6-1.500 6.500 8.500-8 10 1 5-5 4.500-4.500-3.500L32 36l-2 1.500-4.500 3.500-5-4.500 1-5-8-10z" fill="#fff" />
    <path d="M18.500 20.500l9 1.500 1 3-.5 4.500 1.500 5.500-3.500-1-1-4.500-5-2zM45.500 20.500l-9 1.500-1 3 .5 4.500-1.500 5.500 3.500-1 1-4.500 5-2z" fill="#dc5533" />
    <path d="M32 41l7.500 4.500L32 52l-7.500-6.500z" fill="#fff" />
  </Tile>
);

const PhotoBooth = () => (
  <Tile id="photobooth" from="#ea4b39" to="#a52117">
    <path d="M8 22l10-4 7 34-9 2z" fill="none" stroke="#fff" strokeWidth="2.200" />
    <path d="M34 12l7-2v2z" fill="#fff" />
    <rect x="21" y="14" width="35" height="34" fill="#fff" />
    <ellipse cx="38.500" cy="27" rx="6" ry="7" fill="#c93427" />
    <path d="M26 44q2-9 12.500-9T51 44z" fill="#c93427" />
    <circle cx="50" cy="50" r="17.500" fill="#424243" />
    <circle cx="50" cy="50" r="10" fill="#262629" />
    <circle cx="50" cy="50" r="6.500" fill="#4c4a6b" />
    <circle cx="51.500" cy="49" r="3" fill="#6d4a9e" />
  </Tile>
);

const petals = ['#f09b38', '#ecdc45', '#a9cf52', '#67b68f', '#5b9ee0', '#7a78c4', '#b06cb4', '#e75f52'];
const Photos = () => (
  <Tile id="photos" from="#ffffff" to="#fafafa">
    {petals.map((c, i) => (
      <rect key={c} x="24" y="4" width="16" height="26" rx="8" fill={c} fillOpacity="0.850" transform={`rotate(${i * 45} 32 32)`} />
    ))}
    <circle cx="32" cy="32" r="1.500" fill="#fff" />
  </Tile>
);

const PlayerApp = () => (
  <Tile id="player" from="#dc5152" to="#d03732">
    <rect x="13" y="14" width="39" height="27" rx="3" fill="#fff" />
    <path d="M29 20.500v14l10-7z" fill="#d43f3d" />
    <rect x="25.500" y="45.500" width="14" height="4.500" rx="1" fill="#fff" />
  </Tile>
);

const Spotify = () => (
  <span className="flex size-[66px] items-center justify-center rounded-full bg-[#121212]">
    <FaSpotify size={66} color="#65d46e" />
  </span>
);

const Vlc = () => (
  <svg viewBox="0 0 64 72" className="h-[73px] w-[65px] shrink-0">
    <path d="M8 46h48l8 26H0z" fill="#ee9430" />
    <path d="M10 52q22 26 44 0l-3-9H13z" fill="#d0701f" />
    <path d="M28 2q4-2 8 0l15 52q-19 12-38 0z" fill="#eb9034" />
    <path d="M25 11h14l4 13q-11 4-22 0zM17.500 38q14 6 29 0l4 14q-18 10-37 0z" fill="#f4f4f4" />
  </svg>
);

const VoiceMemos = () => (
  <Tile id="voice" from="#2a2a2b" to="#151516">
    <path d="M2 32h2M5 31.500v1.500M8 31v2M11 24v15M14.500 27v10M17.500 19v24M20 12v41M23 15v32M26.500 21v22M29.500 26v12" stroke="#c8443b" strokeWidth="1.400" />
    <path d="M35 25v14M38 28v8M41 27v10M44 29v6M47 30v4M50 30.500v3M53 31v2M56 31v2M60 31.500v1.500" stroke="#eee" strokeWidth="1.400" />
    <path d="M32 8v49" stroke="#4b9cf0" strokeWidth="1.600" />
    <circle cx="32" cy="8" r="2" fill="#4b9cf0" />
    <circle cx="32" cy="57" r="2" fill="#4b9cf0" />
  </Tile>
);

const Cube = () => (
  <Tile id="cube" from="#e2443a" to="#a32720">
    <g fill="#fff">
      <path d="M12 13l10-3-2 11-10 2zM24 9l10-3-2 11-10 3zM9 25l9-2 5 10-10-2zM20 22l11-3 5 9-11 4zM34 7l9 3 5 11-10-2zM46 22l11 3-3 11-8-5z" />
      <path d="M8 33l10 3 2 9-8-4zM20 35l10 4 1 9-9-3zM33 32l9-4 2 11-9 4zM45 34l8-3-1 10-8 4zM14 44l8 3 2 9-7-5zM34 46l8-3 1 9-8 4zM24 49l9 2 1 7-8-1zM45 46l7-3-3 9-6 4z" />
    </g>
  </Tile>
);

const WhatsApp = () => (
  <Tile id="whatsapp" from="#86ea79" to="#4fc53c">
    <foreignObject x="4" y="4" width="56" height="56"><FaWhatsapp size={56} color="#ffffff" /></foreignObject>
  </Tile>
);

const Chrome = () => (
  <Tile id="chrome" from="#fbfbfb" to="#f1efef">
    <path d="M32 32L32 18h24.250A28 28 0 0 1 32 60z" fill="#f3bd42" />
    <path d="M44.100 39L32 60A28 28 0 0 1 7.750 18L19.900 39z" fill="#3f9950" />
    <path d="M7.750 18L19.900 39 32 32 32 18z" fill="#3f9950" />
    <path d="M7.750 18A28 28 0 0 1 56.250 18H32A14 14 0 0 0 19.900 25z" fill="#d94435" />
    <path d="M7.750 18L19.900 39A14 14 0 0 1 32 18z" fill="#d94435" />
    <path d="M7.750 18L19.900 39 32 46v14A28 28 0 0 1 7.750 18z" fill="#3f9950" />
    <circle cx="32" cy="32" r="13.500" fill="#fff" />
    <circle cx="32" cy="32" r="10.500" fill="#3f79ea" />
    <g clipPath="url(#chromeClip)">
      <path d="M-4 40L36-4H14L-4 14z" fill="#8f3b76" />
      <text x="0" y="0" transform="translate(9 23) rotate(-47)" fontFamily="Inter, sans-serif" fontSize="10.500" fontWeight="500" fill="#f6e4f1">DEV</text>
    </g>
  </Tile>
);

const VsCode = () => (
  <Tile id="vscode" from="#ffffff" to="#ffffff">
    <path d="M8.500 23.500l4-3.500L44 45v9z" fill="#2a6ab5" />
    <path d="M8.500 41l4 3.500L44 20V10z" fill="#3278c6" />
    <path d="M43 9.500l11 5v35L43 54.500 40 52V12z" fill="#459be8" />
  </Tile>
);

const UTorrent = () => (
  <svg viewBox="0 0 80 80" className="size-20 shrink-0">
    <circle cx="40" cy="40" r="38" fill="#fff" stroke="#75ba3f" strokeWidth="3.400" />
    <path d="M11 26l16-4 6 23q3 8 10 5t4-12l-5-20 13-4 7 25q3 6 10 4l3-1-2 9q-13 4-19-4-5 9-16 9l6 21-8 1-6-1z" fill="#75ba3f" />
  </svg>
);

const Preview = () => (
  <Tile id="preview" from="#f6f6f6" to="#ececec">
    <defs>
      <linearGradient id="sky" x1="0" y1="0" x2="0" y2="1"><stop offset="0" stopColor="#8fb4ee" /><stop offset="1" stopColor="#b9cdf3" /></linearGradient>
    </defs>
    <rect x="5" y="5" width="54" height="54" rx="9" fill="url(#sky)" />
    <path d="M5 34h54v16q0 9-9 9H14q-9 0-9-9z" fill="#2f4677" />
    <path d="M5 43l12 3 9-5 10 8v10H14q-9 0-9-9z" fill="#dbe5ee" />
    <path d="M10 50h8l3 5-8 1z" fill="#8a6f52" />
    <path d="M35 44h23l8 18q1 5-5 5H33q-6 0-5-5z" fill="#d5d5d5" fillOpacity="0.900" stroke="#666" strokeWidth="1" />
    <path d="M38 55l4-3 3 4-5 3zM46 51l6 1-1 5-5-1zM43 60l6-1 3 3h-8z" fill="#6f8196" />
    <rect x="32.500" y="31" width="28" height="14" rx="4.500" fill="#171717" />
    <ellipse cx="46.500" cy="34" rx="11" ry="2" fill="#4a4a4a" />
  </Tile>
);

const DocumentStack = () => (
  <svg viewBox="0 0 54 72" className="h-[72px] w-[54px] shrink-0 drop-shadow">
    <rect x="1" y="3" width="52" height="68" fill="#4a94c8" />
    <path d="M1 4h4v67H1z" fill="#1b1b1b" />
    <path d="M4 1h31l18 20v50H4z" fill="#fafafa" />
    <path d="M4 1h31v10H4z" fill="#e6e6e6" />
    <path d="M35 1l18 5v16H36z" fill="#eeeeee" stroke="#cfcfcf" strokeWidth="0.700" />
    <path d="M6 13h26M6 16h26M6 19h27M6 22h28M6 25h42M6 28h43M6 31h40M6 34h20M6 37h43M6 40h40" stroke="#8e8e8e" strokeWidth="1.200" strokeDasharray="5 0.800 3 0.600" />
  </svg>
);

const Trash = () => (
  <svg viewBox="0 0 60 76" className="h-[76px] w-[60px] shrink-0">
    <path d="M5 14l6-9 8 2 6-5 8 4 8-4 6 6 7 4-2 8H8z" fill="#e7e7e4" />
    <path d="M12 10l6 3-5 3zM23 5l5 6-7 2zM38 6l6 5-8 1zM47 9l4 4-6 2zM16 6l4 2-3 3zM31 12l5 3-6 2z" fill="#555a5f" />
    <path d="M26 9l6 4-8 3z" fill="#3f9be0" />
    <path d="M34 5l4 9-5 2z" fill="#e0763f" />
    <path d="M19 12l5 4h-7z" fill="#58a05a" />
    <path d="M2 9q6 9 28 9t28-9L51 70q-1 4-6 4H15q-5 0-6-4z" fill="#e4e4e4" fillOpacity="0.960" />
    <path d="M2 9q6 9 28 9t28-9" fill="none" stroke="#fff" strokeWidth="1.600" />
    <path d="M14 24l6 40M30 22l-3 46M46 24l-7 42" stroke="#dadada" strokeWidth="2.500" />
  </svg>
);

/* ---------- dock ---------- */

const DockItem = ({ children, open, badge }: Kids & { open?: boolean; badge?: string }) => (
  <div className="relative flex h-full w-[83.190px] shrink-0 items-center justify-center pb-1.5">
    {children}
    {badge && (
      <span className={`absolute top-[7px] flex h-[31px] items-center justify-center rounded-full bg-[#e9503f]/95 text-[18px] text-white shadow ${badge.length > 2 ? 'left-[43px] w-[38px] tracking-[-0.500px]' : 'left-[54px] w-[31px]'}`}>
        {badge}
      </span>
    )}
    {open && <span className="absolute bottom-1 left-1/2 size-2 -translate-x-1/2 rounded-full bg-[#1a0d0c]" />}
  </div>
);

const Dock = () => (
  <footer className="mx-auto mt-0.5 flex h-[102px] w-[2748px] items-center rounded-[30px] bg-[linear-gradient(to_right,#989696,#8f8483_6%,#948584_9%,#a09d9d_14%,#aeaeae_20%,#b2b2b2_31%,#8c8f90_34%,#6f7577_38%,#707678_42%,#a39a9b_46%,#a89799_48%,#7c7174_50%,#6c6d73_53%,#716c71_57%,#9a7777_61%,#ba7573_66%,#9c7975_70%,#96796f_73%,#ab8b7e_77%,#a57672_80%,#b37a79_84%,#b9a9a8_88%,#c0bebe_91%,#c4c4c4)] pl-[6px] shadow-[0_0_90px_rgba(0,0,0,0.260)] outline-2 -outline-offset-2 outline-white/15">
    <DockItem open><Finder /></DockItem>
    <DockItem><Launchpad /></DockItem>
    <DockItem badge="17"><Reminders /></DockItem>
    <DockItem><Contacts /></DockItem>
    <DockItem><Safari /></DockItem>
    <DockItem open badge="2"><Mail /></DockItem>
    <DockItem><MapsApp /></DockItem>
    <DockItem><FaceTime /></DockItem>
    <DockItem><Calendar /></DockItem>
    <DockItem><Notes /></DockItem>
    <DockItem><Freeform /></DockItem>
    <DockItem><Music /></DockItem>
    <DockItem><Keynote /></DockItem>
    <DockItem><Pages /></DockItem>
    <DockItem><AppStore /></DockItem>
    <DockItem><SystemSettings /></DockItem>
    <DockItem><Numbers /></DockItem>
    <DockItem open><Brave /></DockItem>
    <DockItem><PhotoBooth /></DockItem>
    <DockItem><Photos /></DockItem>
    <DockItem><PlayerApp /></DockItem>
    <DockItem><Spotify /></DockItem>
    <DockItem><Vlc /></DockItem>
    <DockItem><VoiceMemos /></DockItem>
    <DockItem open badge="99+"><Cube /></DockItem>
    <DockItem open badge="5"><WhatsApp /></DockItem>
    <DockItem open><Chrome /></DockItem>
    <div className="flex w-[38.600px] shrink-0 justify-center"><span className="h-[74px] w-0.5 bg-[#6b4a49]" /></div>
    <DockItem open><VsCode /></DockItem>
    <DockItem><UTorrent /></DockItem>
    <DockItem><Preview /></DockItem>
    <div className="flex w-[37px] shrink-0 justify-center"><span className="h-[74px] w-0.5 bg-[#8f8f8f]" /></div>
    <DockItem><DocumentStack /></DockItem>
    <DockItem><Trash /></DockItem>
  </footer>
);

/* ---------- desktop ---------- */

const Wallpaper = () => (
  <svg viewBox="0 0 2880 1800" className="absolute inset-0 size-full">
    <defs>
      <linearGradient id="wallRight" x1="0" y1="0" x2="1" y2="1"><stop offset="0" stopColor="#777" /><stop offset="1" stopColor="#c6c6c6" /></linearGradient>
      <filter id="soft" x="-10%" y="-10%" width="120%" height="120%"><feGaussianBlur stdDeviation="3" /></filter>
    </defs>
    <rect width="2880" height="1800" fill="#4d4f52" />
    <rect x="0" y="1600" width="2880" height="200" fill="#17191c" />
    <g filter="url(#soft)">
      <path d="M-10 1702l100-14v18l-100 18z" fill="#6d6d70" />
      <path d="M8 1734l70-12v18l-66 12z" fill="#b9b9bb" />
      <path d="M-10 1782l60-12 40-8v48h-100z" fill="#a3a39f" />
      <path d="M0 1794l50-2 10 18H0z" fill="#6d1f20" />
      <path d="M60 1770h80v40H60z" fill="#a8a8a8" />
      <path d="M128 1785h190v30H128z" fill="#6e2423" />
      <path d="M318 1785h640v30H318z" fill="#aeaeae" />
      <path d="M1266 1785h156v30h-156z" fill="#a9a8a9" />
      <path d="M1424 1785h26v30h-26zM1722 1785h60v30h-60zM1898 1785h86v30h-86z" fill="#a33430" />
      <path d="M1790 1785h110v30h-110z" fill="#bdbdbd" />
      <path d="M2032 1785h260v30h-260z" fill="#7b5f52" />
      <path d="M2310 1785h100v30h-100z" fill="#5d1f20" />
      <path d="M2410 1680h480v130h-480z" fill="url(#wallRight)" />
    </g>
    <rect x="1030" y="1684" width="1390" height="5" fill="#1f3d6e" />
  </svg>
);

export default function App() {
  return (
    <div className="relative flex h-[1800px] w-[2880px] flex-col overflow-hidden font-['Inter',sans-serif]">
      <Wallpaper />
      <MenuBar />
      <div className="relative mt-0.5 flex h-[1636px] flex-col overflow-hidden rounded-[20px]">
        <TabStrip />
        <Toolbar />
        <Bookmarks />
        <Page />
      </div>
      <div className="relative">
        <Dock />
      </div>
    </div>
  );
}
